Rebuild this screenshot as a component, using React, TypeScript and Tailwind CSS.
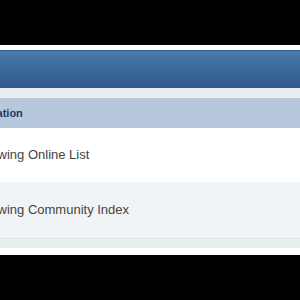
const rows = ['Viewing Online List', 'Viewing Community Index']

const App = () => {
  return (
    <div className="w-[300px] h-[300px] bg-black pt-[45px] overflow-hidden" style={{ fontFamily: '"Liberation Sans", Arial, sans-serif' }}>
      <div className="bg-white pt-[5px] pb-[7px]">
        {/* block head */}
        <div className="h-[38px] border-t border-[#2c6399] bg-gradient-to-b from-[#4b79a8] to-[#2d598b]" />

        {/* block body */}
        <div className="bg-[#e9eef1] pt-[10px] pb-[9px]">
          <div className="h-[30px] bg-[#b7c8dc] flex items-center">
            <span className="-ml-[23px] text-[11px] font-bold text-[#1d3a5f] whitespace-nowrap">Location</span>
          </div>
          <div className="h-[54px] bg-white flex items-center">
            <span className="-ml-[21px] text-[13px] text-[#444] whitespace-nowrap">{rows[0]}</span>
          </div>
          <div className="h-[57px] bg-[#f0f4f7] border-b border-[#dde1ef] flex items-center">
            <span className="-ml-[21px] text-[13px] text-[#444] whitespace-nowrap">{rows[1]}</span>
          </div>
        </div>
      </div>
    </div>
  )
}

export default App
